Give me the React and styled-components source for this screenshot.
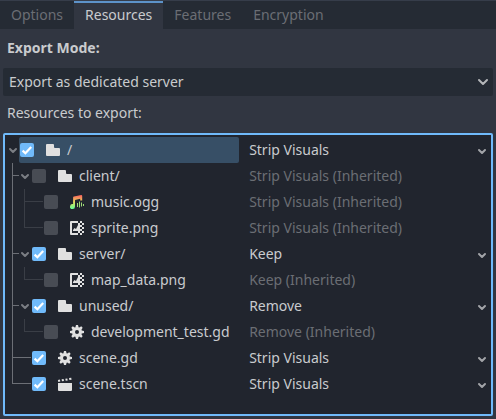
import React, { useState } from "react";
import styled, { createGlobalStyle, css } from "styled-components";

const color = {
  base: "#363d4a",
  panel: "#313641",
  dark: "#252b34",
  tree: "#21252e",
  accent: "#70bafa",
  tabLine: "#5d93c9",
  selected: "#374f66",
  text: "#c9cbce",
  dim: "#6b6e74",
  guide: "#6c6f76",
  guideDim: "#3a3e46",
  box: "#484c54",
  icon: "#e0e0e0",
};

const GlobalStyle = createGlobalStyle`
  *, *::before, *::after { box-sizing: border-box; }
  html { height: 100%; background: ${color.panel}; }
  body { margin: 0; }
  body, button, select {
    font-family: "Noto Sans", sans-serif;
    font-size: 14px;
    line-height: 20px;
    color: ${color.text};
  }
`;

const Panel = styled.main`
  display: flex;
  flex-direction: column;
  background: ${color.panel};
`;

const TabBar = styled.div`
  display: flex;
  background: ${color.dark};
  border-top: 1px solid ${color.base};
`;

const Tab = styled.button`
  height: 28px;
  padding: 0 11px 2px;
  border: 0;
  border-top: 2px solid transparent;
  background: transparent;
  color: ${color.dim};
  white-space: nowrap;
  ${(p) =>
    p.$active &&
    css`
      border-top-color: ${color.tabLine};
      background: ${color.panel};
      color: ${color.text};
    `}
`;

const Content = styled.section`
  display: flex;
  flex-direction: column;
  padding: 9px 3px 3px;
`;

const FieldLabel = styled.label`
  padding: 0 4px;
  font-weight: 700;
`;

const Caption = styled.h2`
  margin: 7px 0 10px;
  padding: 0 4px;
  font-size: 14px;
  line-height: 20px;
  font-weight: 400;
`;

const SelectBox = styled.div`
  display: grid;
  align-items: center;
  & > * {
    grid-area: 1 / 1;
  }
  & > svg {
    justify-self: end;
    pointer-events: none;
  }
`;

const ModeBox = styled(SelectBox)`
  margin-top: 10px;
  & > svg {
    margin-right: 2px;
  }
`;

const BareSelect = styled.select`
  appearance: none;
  width: 100%;
  height: 26px;
  margin: 0;
  padding: 0;
  border: 0;
  background: transparent;
  outline: none;
`;

const ModeSelect = styled(BareSelect)`
  height: 28px;
  padding: 0 24px 0 6px;
  border-radius: 2px;
  background: ${color.dark};
`;

const TreeFrame = styled.div`
  padding: 2px 0 17px;
  border: 2px solid ${color.accent};
  border-radius: 2px;
  background: ${color.tree};
`;

const Tree = styled.table`
  width: 100%;
  table-layout: fixed;
  border-collapse: collapse;
`;

const NameCell = styled.td`
  width: 49%;
  padding: 0 4px 0 2px;
`;

const ModeCell = styled.td`
  height: 26px;
  padding: 0 3px 0 6px;
`;

const NameRow = styled.div`
  display: flex;
  height: 26px;
`;

const line = (c) => `linear-gradient(${c}, ${c})`;

const Guide = styled.span`
  flex: none;
  width: 12px;
  background-repeat: no-repeat;
  ${({ $kind, $dim }) => {
    const l = line($dim ? color.guideDim : color.guide);
    if ($kind === "pass") return `background-image: ${l}; background-size: 1px 100%; background-position: 5px 0;`;
    if ($kind === "run") return `background-image: ${l}; background-size: 100% 1px; background-position: 0 12px;`;
    const tall = $kind === "end" ? "13px" : "100%";
    return `background-image: ${l}, ${l}; background-size: 1px ${tall}, 7px 1px; background-position: 5px 0, 5px 12px;`;
  }}
`;

const Toggle = styled.button`
  display: flex;
  flex: none;
  align-items: center;
  width: 12px;
  padding: 0 0 2px;
  border: 0;
  background: transparent;
`;

const NameLabel = styled.label`
  display: flex;
  flex: 1;
  align-items: center;
  min-width: 0;
  border-radius: 2px;
  white-space: nowrap;
  background: ${(p) => (p.$selected ? color.selected : "transparent")};
  & > svg {
    flex: none;
    margin: 0 6px 0 11px;
  }
`;

const CheckWrap = styled.span`
  display: grid;
  flex: none;
  margin-left: 1px;
  & > * {
    grid-area: 1 / 1;
  }
  & > svg {
    pointer-events: none;
  }
`;

const Check = styled.input`
  appearance: none;
  width: 14px;
  height: 14px;
  margin: 0;
  border-radius: 2px;
  background: ${color.box};
  &:checked {
    background: ${color.accent};
  }
  & + svg {
    visibility: hidden;
  }
  &:checked + svg {
    visibility: visible;
  }
`;

const Inherited = styled.span`
  color: ${color.dim};
  white-space: nowrap;
`;

const Chevron = ({ tone = "#b4b6b9" }) => (
  <svg width="16" height="16" viewBox="0 0 16 16" aria-hidden="true">
    <path d="M4 6l4 4 4-4" fill="none" stroke={tone} strokeWidth="2" strokeLinecap="round" strokeLinejoin="round" />
  </svg>
);

const SmallChevron = ({ tone = "#a2a4a8" }) => (
  <svg width="12" height="12" viewBox="0 0 12 12" aria-hidden="true">
    <path d="M3 6l3 3 3-3" fill="none" stroke={tone} strokeWidth="2" strokeLinecap="round" strokeLinejoin="round" />
  </svg>
);

const Tick = () => (
  <svg width="14" height="14" viewBox="0 0 14 14" aria-hidden="true">
    <path d="M2.6 7.6l2.8 2.7L11.2 4" fill="none" stroke="#fff" strokeWidth="2.2" />
  </svg>
);

const icons = {
  folder: (
    <path
      fill={color.icon}
      d="M2 2a1 1 0 0 0-1 1v10a1 1 0 0 0 1 1h12a1 1 0 0 0 1-1V7a1 1 0 0 0-1-1h-4a1 1 0 0 1-1-1V3a1 1 0 0 0-1-1z"
    />
  ),
  script: (
    <path
      fill={color.icon}
      d="M7 1l-.564 2.258a5 5 0 0 0-.69.287L3.758 2.352 2.344 3.766 3.539 5.76a5 5 0 0 0-.285.685L1 7v2l2.258.564a5 5 0 0 0 .279.688l-1.193 1.99 1.414 1.414 1.994-1.195a5 5 0 0 0 .686.285L7 15h2l.564-2.258a5 5 0 0 0 .688-.281l1.99 1.195 1.414-1.414-1.195-1.992a5 5 0 0 0 .285-.688L15 9V7l-2.258-.564a5 5 0 0 0-.281-.688l1.195-1.99-1.414-1.414-1.992 1.195a5 5 0 0 0-.688-.285L9 1zm1 5a2 2 0 1 1 0 4 2 2 0 0 1 0-4z"
    />
  ),
  scene: (
    <path
      fill={color.icon}
      d="M1 7v7a1 1 0 0 0 1 1h12a1 1 0 0 0 1-1V7zM.9 3.9l2-.3.4 2-2 .3zM4.6 3.3l2-.3.4 2-2 .3zM8.3 2.7l2-.3.4 2-2 .3zM12 2.1l2.2-.3.4 2-2.2.3z"
    />
  ),
  texture: (
    <>
      <path fill={color.icon} d="M2 1h7v2H3v10h6v2H2a1 1 0 0 1-1-1V2a1 1 0 0 1 1-1z" />
      <path
        fill={color.icon}
        d="M9 3h2v2H9zM9 7h2v2H9zM9 11h2v2H9zM11 1h2v2h-2zM11 5h2v2h-2zM11 9h2v2h-2zM11 13h2v2h-2zM13 3h2v2h-2zM13 7h2v2h-2zM13 11h2v2h-2z"
      />
      <path fill={color.icon} d="M4 11V10l1.5-2L7 9l2-4h2v2H9v2h2v2z" />
    </>
  ),
  audio: (
    <>
      <defs>
        <linearGradient id="note" x1="0" y1="1" x2="0" y2="15" gradientUnits="userSpaceOnUse">
          <stop offset="0" stopColor="#ff5f5f" />
          <stop offset="0.5" stopColor="#e1da5b" />
          <stop offset="1" stopColor="#5fff97" />
        </linearGradient>
      </defs>
      <path
        fill="url(#note)"
        d="M12.2 1L5 2.6a1 1 0 0 0-.9 1v6.5A2.5 2.5 0 1 0 6 12.5V6l5.2-1.2V6.5h2V2a1 1 0 0 0-1-1z"
      />
      <path d="M8.5 9v4M10.5 7.5v6M12.5 8.5v4M14.5 10v2" fill="none" stroke="#9fdc78" strokeWidth="1" />
    </>
  ),
};

const FileIcon = ({ name }) => (
  <svg width="16" height="16" viewBox="0 0 16 16" aria-hidden="true">
    {icons[name]}
  </svg>
);

const tabs = ["Options", "Resources", "Features", "Encryption"];
const modes = ["Strip Visuals", "Keep", "Remove"];

const entries = [
  { name: "/", icon: "folder", guides: [], open: true, checked: true, mode: "Strip Visuals", selected: true },
  { name: "client/", icon: "folder", guides: ["tee"], open: true, mode: "Strip Visuals", inherited: true },
  { name: "music.ogg", icon: "audio", guides: ["pass", "tee"], mode: "Strip Visuals", inherited: true },
  { name: "sprite.png", icon: "texture", guides: ["pass", "end"], mode: "Strip Visuals", inherited: true },
  { name: "server/", icon: "folder", guides: ["tee"], open: true, checked: true, mode: "Keep" },
  { name: "map_data.png", icon: "texture", guides: ["pass", "end"], mode: "Keep", inherited: true },
  { name: "unused/", icon: "folder", guides: ["tee"], open: true, checked: true, mode: "Remove" },
  { name: "development_test.gd", icon: "script", guides: ["pass", "end"], mode: "Remove", inherited: true },
  { name: "scene.gd", icon: "script", guides: ["tee"], checked: true, mode: "Strip Visuals" },
  { name: "scene.tscn", icon: "scene", guides: ["end"], checked: true, mode: "Strip Visuals" },
];

const Entry = ({ entry }) => (
  <tr>
    <NameCell>
      <NameRow>
        {entry.guides.map((kind, i) => (
          <Guide key={i} $kind={kind} $dim={i > 0} />
        ))}
        {entry.open ? (
          <Toggle aria-label={`Collapse ${entry.name}`} aria-expanded="true">
            <SmallChevron tone="#7b7e84" />
          </Toggle>
        ) : (
          <Guide $kind="run" $dim={entry.guides.length > 1} />
        )}
        <NameLabel $selected={entry.selected}>
          <CheckWrap>
            <Check type="checkbox" defaultChecked={entry.checked} />
            <Tick />
          </CheckWrap>
          <FileIcon name={entry.icon} />
          {entry.name}
        </NameLabel>
      </NameRow>
    </NameCell>
    <ModeCell>
      {entry.inherited ? (
        <Inherited>{entry.mode} (Inherited)</Inherited>
      ) : (
        <SelectBox>
          <BareSelect aria-label={`Export mode of ${entry.name}`} defaultValue={entry.mode}>
            {modes.map((m) => (
              <option key={m}>{m}</option>
            ))}
          </BareSelect>
          <SmallChevron />
        </SelectBox>
      )}
    </ModeCell>
  </tr>
);

export default function App() {
  const [active, setActive] = useState("Resources");
  return (
    <Panel>
      <GlobalStyle />
      <TabBar role="tablist">
        {tabs.map((t) => (
          <Tab key={t} role="tab" aria-selected={t === active} $active={t === active} onClick={() => setActive(t)}>
            {t}
          </Tab>
        ))}
      </TabBar>
      <Content>
        <FieldLabel htmlFor="mode">Export Mode:</FieldLabel>
        <ModeBox>
          <ModeSelect id="mode" defaultValue="Export as dedicated server">
            <option>Export as dedicated server</option>
          </ModeSelect>
          <Chevron />
        </ModeBox>
        <Caption id="resources">Resources to export:</Caption>
        <TreeFrame>
          <Tree aria-labelledby="resources">
            <tbody>
              {entries.map((e) => (
                <Entry key={e.name} entry={e} />
              ))}
            </tbody>
          </Tree>
        </TreeFrame>
      </Content>
    </Panel>
  );
}
